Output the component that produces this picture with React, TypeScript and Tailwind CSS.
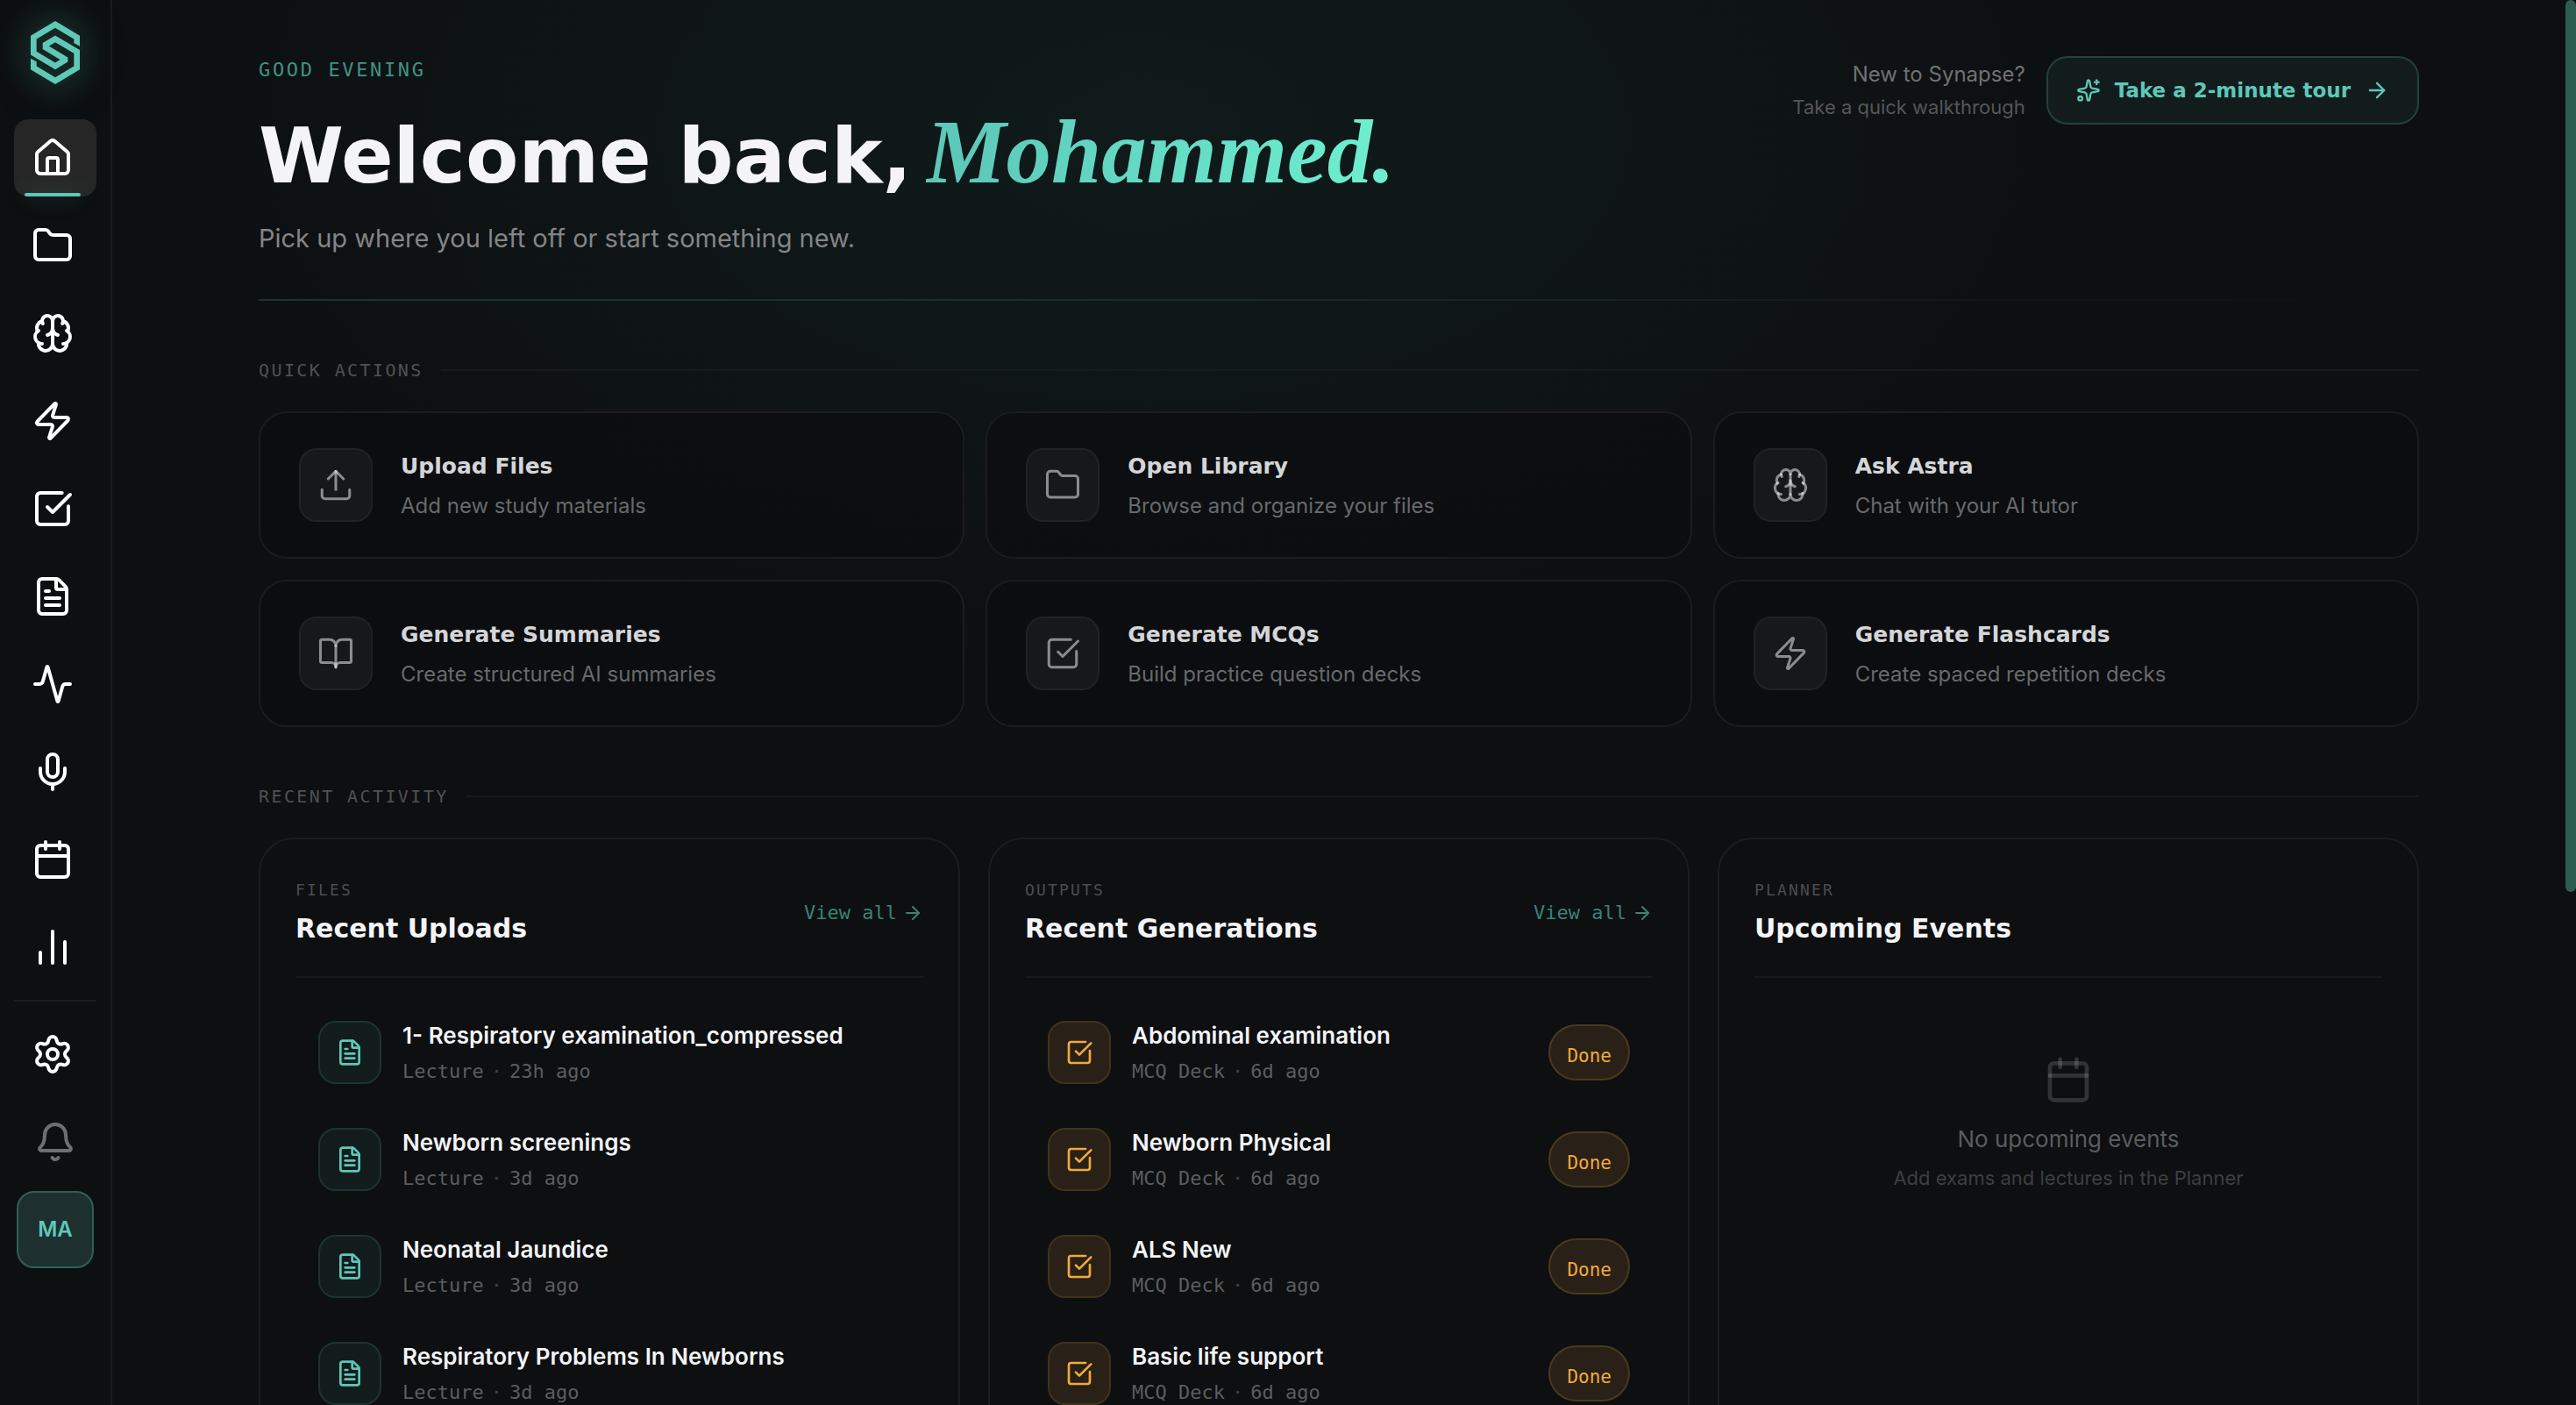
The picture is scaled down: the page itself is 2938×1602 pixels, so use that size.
// App.tsx

import React from 'react';
import {
  Activity,
  ArrowRight,
  Bell,
  BookOpen,
  Brain,
  Calendar,
  ChartNoAxesColumn,
  FileText,
  Folder,
  House,
  LucideIcon,
  Mic,
  Settings,
  Sparkles,
  SquareCheckBig,
  Upload,
  Zap,
} from 'lucide-react';

interface NavI {
  label: string,
  icon: LucideIcon,
}

interface ActionI {
  title: string,
  text: string,
  icon: LucideIcon,
}

interface ItemI {
  name: string,
  kind: string,
  time: string,
}

const nav: NavI[] = [
  { label: 'Home', icon: House },
  { label: 'Library', icon: Folder },
  { label: 'Astra', icon: Brain },
  { label: 'Flashcards', icon: Zap },
  { label: 'MCQs', icon: SquareCheckBig },
  { label: 'Summaries', icon: FileText },
  { label: 'Activity', icon: Activity },
  { label: 'Record', icon: Mic },
  { label: 'Planner', icon: Calendar },
  { label: 'Analytics', icon: ChartNoAxesColumn },
]

const actions: ActionI[] = [
  { title: 'Upload Files', text: 'Add new study materials', icon: Upload },
  { title: 'Open Library', text: 'Browse and organize your files', icon: Folder },
  { title: 'Ask Astra', text: 'Chat with your AI tutor', icon: Brain },
  { title: 'Generate Summaries', text: 'Create structured AI summaries', icon: BookOpen },
  { title: 'Generate MCQs', text: 'Build practice question decks', icon: SquareCheckBig },
  { title: 'Generate Flashcards', text: 'Create spaced repetition decks', icon: Zap },
]

const uploads: ItemI[] = [
  { name: '1- Respiratory examination_compressed', kind: 'Lecture', time: '23h ago' },
  { name: 'Newborn screenings', kind: 'Lecture', time: '3d ago' },
  { name: 'Neonatal Jaundice', kind: 'Lecture', time: '3d ago' },
  { name: 'Respiratory Problems In Newborns', kind: 'Lecture', time: '3d ago' },
]

const generations: ItemI[] = [
  { name: 'Abdominal examination', kind: 'MCQ Deck', time: '6d ago' },
  { name: 'Newborn Physical', kind: 'MCQ Deck', time: '6d ago' },
  { name: 'ALS New', kind: 'MCQ Deck', time: '6d ago' },
  { name: 'Basic life support', kind: 'MCQ Deck', time: '6d ago' },
]

const Logo: React.FC = () => (
  <svg viewBox="105 72 168 216" className="h-18 w-14" aria-hidden="true">
    <path
      d="M263 148V128L189 84L115 128V182L189 226L222 206V202L156 162V153L189 133L263 177V232L189 276L115 232V210"
      fill="none"
      stroke="#5fc9b8"
      strokeWidth="20"
    />
    <path d="M253 147H273V158ZM105 200V211H125Z" fill="#5fc9b8" />
  </svg>
)

const Sidebar: React.FC = () => (
  <aside className="flex w-32 shrink-0 flex-col items-center border-r-2 border-[#1a1c1e] px-4 pt-6">
    <a href="#home" aria-label="Synapse" className="mb-10 rounded-full bg-[#5ec8b8]/12 shadow-[0_0_32px_8px_rgba(94,200,184,0.12),0_0_64px_8px_rgba(94,200,184,0.08)]">
      <Logo />
    </a>
    <nav className="flex w-full flex-col gap-3">
      {nav.map((v, i) => {
        const Icon = v.icon
        return (
          <a
            key={v.label}
            href="#nav"
            aria-label={v.label}
            className={i === 0
              ? 'relative flex h-22 items-center rounded-2xl bg-[#262626] pl-5 text-white'
              : 'relative flex h-22 items-center rounded-2xl pl-5 text-white'}
          >
            <Icon size={48} />
            {i === 0 ? <span className="absolute bottom-0 left-3 h-1 w-16 rounded-full bg-[#5ec8b8] shadow-[0_0_24px_rgba(94,200,184,0.4)]" /> : null}
          </a>
        )
      })}
    </nav>
    <div className="my-4 h-0.5 w-full shrink-0 bg-[#1a1c1e]" />
    <div className="flex w-full flex-col items-center gap-3">
      <a href="#settings" aria-label="Settings" className="flex h-22 w-full items-center pl-5 text-white">
        <Settings size={48} />
      </a>
      <button aria-label="Notifications" className="flex h-22 w-full items-center justify-center text-[#6d6f71]">
        <Bell size={48} />
      </button>
      <button className="h-22 w-22 rounded-[20px] border-2 border-[#2d5f57] bg-[#1d302f] text-[24px] font-semibold text-[#5ec8b8]">MA</button>
    </div>
  </aside>
)

const SectionTitle: React.FC<{ title: string }> = ({ title }) => (
  <div className="mt-16 mb-8 flex items-center gap-5">
    <h2 className="font-['DejaVu_Sans_Mono',monospace] text-[20px] leading-[30px] tracking-[0.12em] text-[#4f5153] uppercase">{title}</h2>
    <div className="h-0.5 flex-1 bg-[#181b1c]" />
  </div>
)

interface PanelI {
  label: string,
  title: string,
  link?: boolean,
  children: React.ReactNode,
}

const Panel: React.FC<PanelI> = ({ label, title, link, children }) => (
  <section className="min-w-0 rounded-[40px] border-2 border-[#1a1c1e] bg-[#0d0f11] p-10">
    <header className="flex items-center justify-between border-b-2 border-[#17191b] pb-7">
      <div>
        <p className="font-['DejaVu_Sans_Mono',monospace] text-[18px] leading-[36px] tracking-[0.12em] text-[#4b4d4f] uppercase">{label}</p>
        <h3 className="font-['DejaVu_Sans',sans-serif] text-[30px] leading-[52px] font-bold text-[#f4f4f6]">{title}</h3>
      </div>
      {link ? (
        <a href="#all" className="flex items-center gap-1.5 font-['DejaVu_Sans_Mono',monospace] text-[22px] leading-[32px] text-[#3b8175]">
          View all
          <ArrowRight size={24} />
        </a>
      ) : null}
    </header>
    {children}
  </section>
)

const Item: React.FC<{ item: ItemI, done?: boolean }> = ({ item, done }) => (
  <li className="flex items-center gap-6 border-2 border-transparent px-6 py-5">
    <div className={done
      ? 'flex h-18 w-18 shrink-0 items-center justify-center rounded-[20px] border-2 border-[#40321b] bg-[#292117] text-[#f0a93f]'
      : 'flex h-18 w-18 shrink-0 items-center justify-center rounded-[20px] border-2 border-[#1b3431] bg-[#131c1d] text-[#5ec8b8]'}
    >
      {done ? <SquareCheckBig size={32} /> : <FileText size={32} />}
    </div>
    <div className="min-w-0 flex-1">
      <p className="truncate text-[26px] leading-[38px] font-semibold text-[#f4f4f6]">{item.name}</p>
      <p className="mt-1.5 flex gap-2 font-['DejaVu_Sans_Mono',monospace] text-[22px] leading-[32px] text-[#5b5d5f]">
        <span>{item.kind}</span>
        <span className="text-[#3f4143]">·</span>
        <span>{item.time}</span>
      </p>
    </div>
    {done ? (
      <span className="flex h-16 items-center rounded-full border-2 border-[#4a391c] bg-[#292117] px-[19px] pt-2.5 font-['DejaVu_Sans_Mono',monospace] text-[21px] text-[#f0a93f]">Done</span>
    ) : null}
  </li>
)

const App: React.FC = () => {
  return (
    <div className="flex h-screen overflow-hidden bg-[#0d0f11] font-[Inter,sans-serif]">
      <Sidebar />

      <main className="min-w-0 flex-1 overflow-hidden bg-[radial-gradient(ellipse_1150px_640px_at_42%_150px,rgba(60,190,170,0.065),transparent)]">
        <div className="mx-auto max-w-[2560px] px-12 pt-16">
          <header className="flex items-start justify-between pb-[45px]">
            <div>
              <p className="font-['DejaVu_Sans_Mono',monospace] text-[22px] leading-[32px] tracking-[0.12em] text-[#409386] uppercase">Good evening</p>
              <h1 className="mt-8 font-['DejaVu_Sans',sans-serif] text-[88px] leading-[100px] font-bold text-[#f4f4f6]">
                Welcome back,
                <em className="ml-4 bg-linear-to-r from-[#5cc6b7] to-[#6ef0d0] bg-clip-text font-['Liberation_Serif',serif] text-[103px] leading-[80px] text-transparent">Mohammed.</em>
              </h1>
              <p className="mt-5 text-[29px] leading-[48px] text-[#838587]">Pick up where you left off or start something new.</p>
            </div>
            <div className="flex items-center gap-6">
              <div className="text-right">
                <p className="text-[24px] leading-[38px] text-[#6f7173]">New to Synapse?</p>
                <p className="text-[22px] leading-[36px] text-[#545658]">Take a quick walkthrough</p>
              </div>
              <button className="flex h-[78px] items-center gap-4 rounded-3xl border-2 border-[#20423d] bg-[#131c1d] px-8 font-['DejaVu_Sans',sans-serif] text-[23px] font-bold text-[#5ec8b8]">
                <Sparkles size={28} />
                Take a 2-minute tour
                <ArrowRight size={28} />
              </button>
            </div>
          </header>
          <div className="h-0.5 bg-linear-to-r from-[#5ec8b8]/20 to-transparent" />

          <SectionTitle title="Quick actions" />
          <div className="grid grid-cols-3 gap-6">
            {actions.map((v) => {
              const Icon = v.icon
              return (
                <button key={v.title} className="flex items-center gap-8 rounded-[32px] border-2 border-[#1a1c1e] bg-[#0c0d10]/70 px-11 py-10 text-left">
                  <span className="flex h-21 w-21 shrink-0 items-center justify-center rounded-[20px] border-2 border-[#202225] bg-[#16181b] text-white/50">
                    <Icon size={42} strokeWidth={1.75} />
                  </span>
                  <span className="flex min-w-0 flex-col gap-2">
                    <span className="font-['DejaVu_Sans',sans-serif] text-[25px] leading-[40px] font-bold text-[#d5d5d7]">{v.title}</span>
                    <span className="text-[24px] leading-[34px] text-[#67696b]">{v.text}</span>
                  </span>
                </button>
              )
            })}
          </div>

          <SectionTitle title="Recent activity" />
          <div className="grid grid-cols-3 gap-8">
            <Panel label="Files" title="Recent Uploads" link>
              <ul className="flex flex-col gap-0.5 pt-[25px]">
                {uploads.map((v) => <Item key={v.name} item={v} />)}
              </ul>
            </Panel>
            <Panel label="Outputs" title="Recent Generations" link>
              <ul className="flex flex-col gap-0.5 pt-[25px]">
                {generations.map((v) => <Item key={v.name} item={v} done />)}
              </ul>
            </Panel>
            <Panel label="Planner" title="Upcoming Events">
              <div className="flex flex-col items-center pt-22 text-center">
                <Calendar size={56} className="text-white/15" />
                <p className="mt-5 text-[26px] leading-[40px] text-[#5a5c5e]">No upcoming events</p>
                <p className="mt-2 text-[22px] leading-[32px] text-[#3d3f41]">Add exams and lectures in the Planner</p>
              </div>
            </Panel>
          </div>
        </div>
      </main>

      {/* scroll track */}
      <div className="w-3 shrink-0">
        <div className="h-[63.5%] rounded-full bg-[#2d5d51]" />
      </div>
    </div>
  );
};

export default App;
